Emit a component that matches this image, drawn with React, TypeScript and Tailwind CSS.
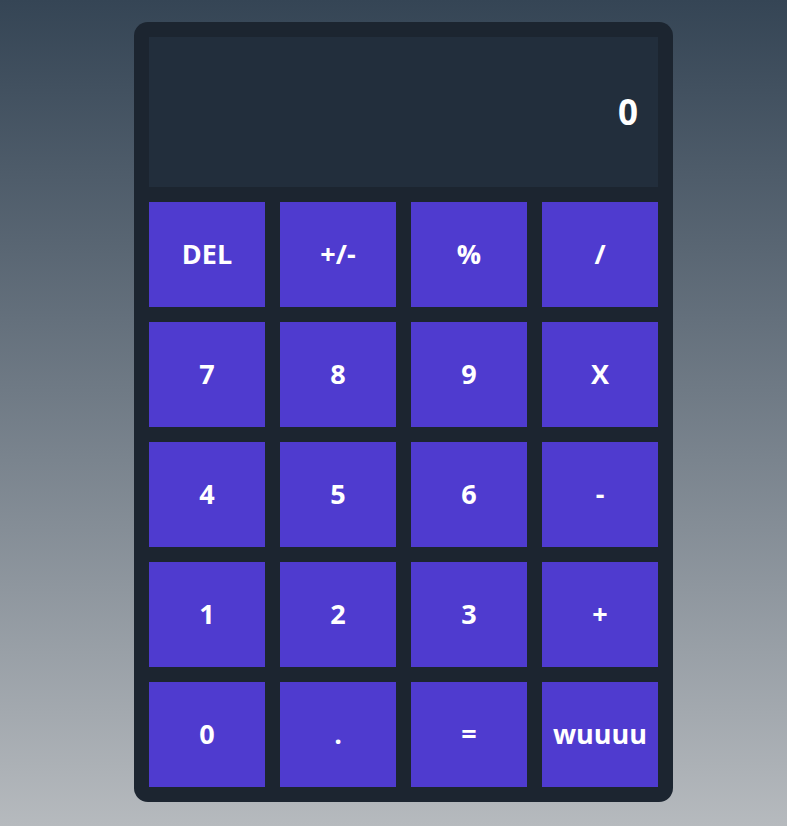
const keys = [
  "DEL", "+/-", "%", "/",
  "7", "8", "9", "X",
  "4", "5", "6", "-",
  "1", "2", "3", "+",
  "0", ".", "=", "wuuuu",
];

export default function App() {
  return (
    <div
      className="min-h-[826px] w-full bg-gradient-to-b from-[#354555] to-[#b6babe] flex justify-center pl-5 pt-[22px]"
      style={{ fontFamily: '"Open Sans", "DejaVu Sans", sans-serif' }}
    >
      <div className="w-[539px] h-[780px] bg-[#1c2530] rounded-[14px] p-[15px] flex flex-col gap-[15px]">
        {/* Display */}
        <div className="h-[150px] bg-[#222e3c] flex items-center justify-end pr-5 text-white text-[35px] font-bold">
          0
        </div>

        {/* Keypad */}
        <div className="grid grid-cols-4 gap-[15px]">
          {keys.map((k) => (
            <button
              key={k}
              className="h-[105px] bg-[#4f3bcf] text-white text-[27px] font-bold flex items-center justify-center"
            >
              {k}
            </button>
          ))}
        </div>
      </div>
    </div>
  );
}
